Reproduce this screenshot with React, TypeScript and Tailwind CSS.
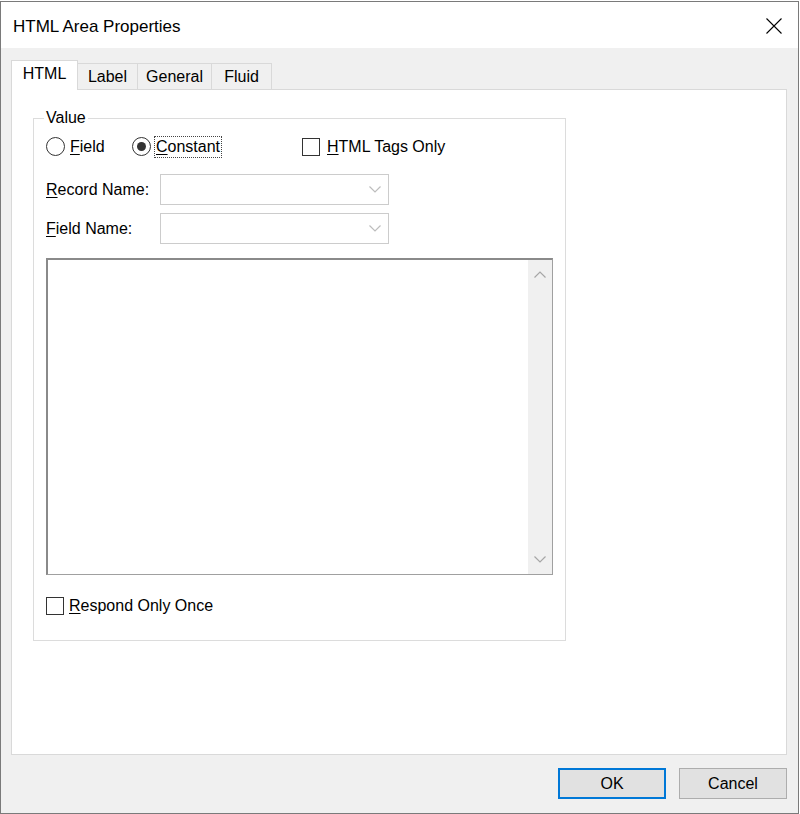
// HTML Area Properties — classic Win10 property dialog with a "Value" group box.
function Chevron({ up = false, className = '' }: { up?: boolean; className?: string }) {
  return (
    <svg width="12" height="7" viewBox="0 0 12 7" className={className}>
      <path
        d={up ? 'M0.5 6.5 L6 1 L11.5 6.5' : 'M0.5 0.5 L6 6 L11.5 0.5'}
        fill="none"
        stroke="currentColor"
        strokeWidth="1.2"
      />
    </svg>
  )
}

function Radio({ checked }: { checked?: boolean }) {
  return (
    <span className="flex h-[19px] w-[19px] shrink-0 items-center justify-center rounded-full border border-[#333333] bg-white">
      {checked && <span className="h-[9px] w-[9px] rounded-full bg-[#333333]" />}
    </span>
  )
}

function Check() {
  return <span className="h-[18px] w-[18px] shrink-0 border border-[#333333] bg-white" />
}

function Combo() {
  return (
    <div className="flex h-[31px] w-[229px] items-center justify-end border border-[#cccccc] bg-white pr-[7px] text-[#bdbdbd]">
      <Chevron />
    </div>
  )
}

const tabs = ['Label', 'General', 'Fluid']
const tabWidths = ['w-[60px]', 'w-[74px]', 'w-[60px]']

export default function App() {
  return (
    <div className="h-[814px] w-[800px] bg-white pt-px font-['Liberation_Sans',Arial,sans-serif] text-[16px] leading-none text-black">
      <div className="flex h-[813px] w-[799px] flex-col border border-[#7a7a7a]">
        {/* title bar */}
        <div className="flex h-[46px] shrink-0 items-center justify-between bg-white pl-[12px] pr-[16px] pt-[2px]">
          <span className="text-[17px]">HTML Area Properties</span>
          <svg width="16" height="16" viewBox="0 0 16 16">
            <path d="M0.5 0.5 L15.5 15.5 M15.5 0.5 L0.5 15.5" stroke="#000" strokeWidth="1.1" />
          </svg>
        </div>

        <div className="flex flex-1 flex-col bg-[#f0f0f0] pl-[10px] pr-[11px] pt-[12px]">
          {/* tabs */}
          <div className="flex h-[29px] items-end">
            <div className="relative z-10 -mb-px flex h-[30px] w-[67px] items-center justify-center border border-b-0 border-[#d9d9d9] bg-white pb-[3px]">
              HTML
            </div>
            {tabs.map((t, i) => (
              <div
                key={t}
                className={`flex h-[26px] ${tabWidths[i]} items-center justify-center border border-b-0 border-l-0 border-[#d9d9d9] bg-[#f0f0f0] pt-px`}
              >
                {t}
              </div>
            ))}
          </div>

          {/* tab panel */}
          <div className="h-[666px] w-[776px] border border-[#d9d9d9] bg-white pl-[21px] pt-[28px]">
            <div className="relative h-[523px] w-[533px] border border-[#dcdcdc] pl-[12px] pt-[18px]">
              <span className="absolute -top-[9px] left-[10px] bg-white px-[2px]">Value</span>

              <div className="flex h-[19px] items-center">
                <label className="flex w-[86px] items-center gap-[5px]">
                  <Radio />
                  <span>
                    <u className="underline-offset-2">F</u>ield
                  </span>
                </label>
                <label className="flex w-[170px] items-center gap-[3px]">
                  <Radio checked />
                  <span className="border border-dotted border-[#444] px-px py-[2px]">
                    <u className="underline-offset-2">C</u>onstant
                  </span>
                </label>
                <label className="flex items-center gap-[7px]">
                  <Check />
                  <span>
                    <u className="underline-offset-2">H</u>TML Tags Only
                  </span>
                </label>
              </div>

              <div className="mt-[18px] flex items-center">
                <span className="w-[114px]">
                  <u className="underline-offset-2">R</u>ecord Name:
                </span>
                <Combo />
              </div>
              <div className="mt-[8px] flex items-center">
                <span className="w-[114px]">
                  <u className="underline-offset-2">F</u>ield Name:
                </span>
                <Combo />
              </div>

              <div className="mt-[14px] flex h-[317px] w-[507px] border-l-2 border-t-2 border-b border-r border-b-[#a0a0a0] border-l-[#8a8a8a] border-r-[#a0a0a0] border-t-[#8a8a8a] bg-white">
                <div className="flex-1" />
                <div className="flex w-[24px] flex-col items-center justify-between bg-[#f0f0f0] py-[11px] text-[#a6a6a6]">
                  <Chevron up />
                  <Chevron />
                </div>
              </div>

              <label className="mt-[22px] flex items-center gap-[5px]">
                <Check />
                <span>
                  <u className="underline-offset-2">R</u>espond Only Once
                </span>
              </label>
            </div>
          </div>

          {/* footer buttons */}
          <div className="mt-[13px] flex justify-end gap-[13px]">
            <button className="flex h-[31px] w-[108px] items-center justify-center border-2 border-[#0078d7] bg-[#e1e1e1]">
              OK
            </button>
            <button className="flex h-[31px] w-[108px] items-center justify-center border border-[#adadad] bg-[#e1e1e1]">
              Cancel
            </button>
          </div>
        </div>
      </div>
    </div>
  )
}
